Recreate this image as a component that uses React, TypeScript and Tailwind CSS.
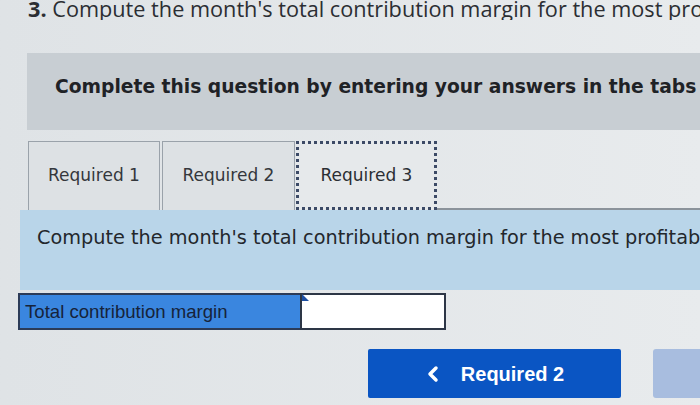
import { ChevronLeft } from 'lucide-react';

const TABS = ['Required 1', 'Required 2', 'Required 3'];

export default function App() {
  return (
    <div className="w-[700px] h-[405px] overflow-hidden bg-gradient-to-r from-[#dfe3e6] to-[#e8ebed] text-[#2b2e33]">
      {/* Question heading */}
      <div
        className="pl-[28px] h-[22px] leading-[22px] text-[21.7px] whitespace-nowrap -mt-[2px] overflow-hidden"
        style={{ fontFamily: '"Open Sans", sans-serif' }}
      >
        <span className="font-bold">3.</span> Compute the month's total contribution margin for the most profitable product
      </div>

      {/* Instruction banner */}
      <div
        className="ml-[27px] mt-[33px] h-[77px] bg-[#c8ced3] flex items-center pl-[28px] pb-[8px] whitespace-nowrap overflow-hidden"
        style={{ fontFamily: '"DejaVu Sans", sans-serif' }}
      >
        <span className="text-[18.7px] font-bold text-[#1f2226]">
          Complete this question by entering your answers in the tabs below.
        </span>
      </div>

      {/* Tabs */}
      <div
        className="mt-[11px] ml-[28px] flex items-end h-[69px]"
        style={{ fontFamily: '"DejaVu Sans", sans-serif' }}
      >
        <div className="w-[132px] h-full border border-b-0 border-[#9aa2aa] bg-[#dde1e4] flex items-center justify-center text-[17px] text-[#34373c]">
          {TABS[0]}
        </div>
        <div className="ml-[2px] w-[133px] h-full border border-b-0 border-[#9aa2aa] bg-[#dde1e4] flex items-center justify-center text-[17px] text-[#34373c]">
          {TABS[1]}
        </div>
        <div className="ml-[1px] w-[141px] h-full border-[3px] border-dotted border-[#3c4a66] bg-[#e6e9eb] flex items-center justify-center text-[17px] text-[#2b2e33]">
          {TABS[2]}
        </div>
        <div className="flex-1 border-b-2 border-[#8b939b]" />
      </div>

      {/* Tab content */}
      <div
        className="ml-[20px] h-[80px] bg-[#b9d5e9] pl-[17px] pt-[14px] whitespace-nowrap overflow-hidden"
        style={{ fontFamily: '"DejaVu Sans", sans-serif' }}
      >
        <span className="text-[19.3px] text-[#23272c]">
          Compute the month's total contribution margin for the most profitable product.
        </span>
      </div>

      {/* Answer row */}
      <div
        className="mt-[3px] ml-[18px] flex h-[37px]"
        style={{ fontFamily: '"Liberation Sans", Arial, sans-serif' }}
      >
        <div className="w-[282px] bg-[#3a86df] border-2 border-r-0 border-[#2b3b58] flex items-center pl-[5px] text-[18.6px] text-[#16233a]">
          Total contribution margin
        </div>
        <div className="relative w-[146px] bg-white border-2 border-[#2d3646]">
          <div className="absolute left-0 top-0 -mt-[1px] w-0 h-0 border-t-[7px] border-t-transparent border-l-[7px] border-l-[#1d4fa3]" />
        </div>
      </div>

      {/* Navigation */}
      <div
        className="mt-[19px] flex items-stretch h-[49px]"
        style={{ fontFamily: '"Liberation Sans", Arial, sans-serif' }}
      >
        <button className="ml-[368px] w-[253px] bg-[#0a55c3] rounded-[2px] flex items-center justify-center gap-[16px] pr-[4px] text-white text-[20px] font-bold">
          <ChevronLeft className="w-6 h-6" strokeWidth={3.5} />
          Required 2
        </button>
        <div className="ml-[32px] flex-1 bg-[#a8bddf] rounded-l-[3px]" />
      </div>
    </div>
  );
}
